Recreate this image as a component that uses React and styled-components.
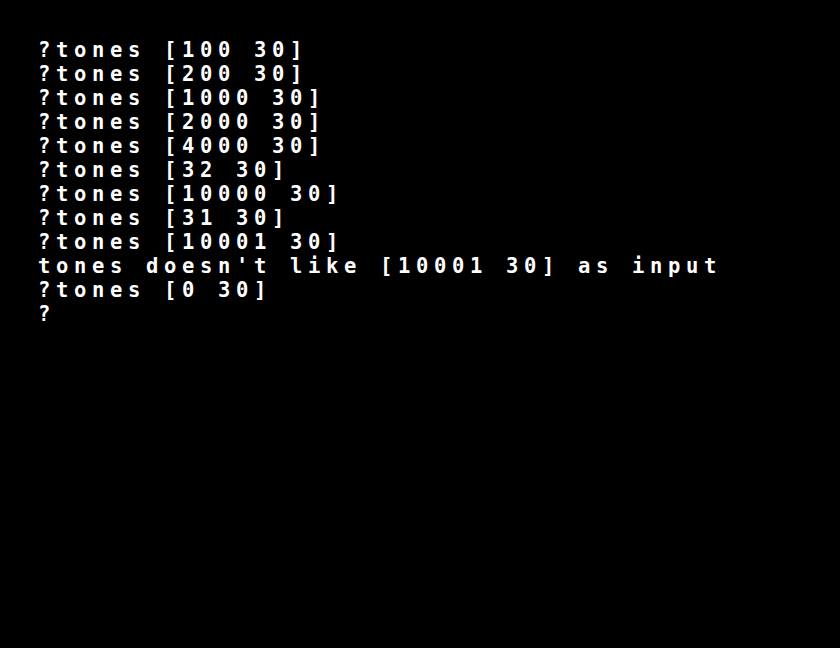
import React from "react";
import styled, { createGlobalStyle } from "styled-components";

const GlobalStyle = createGlobalStyle`
  html, body {
    margin: 0;
    padding: 0;
    background: #000;
  }
`;

const Screen = styled.div`
  width: 840px;
  height: 648px;
  box-sizing: border-box;
  padding: 38px 38px;
  background: #000;
  color: #fff;
  font-family: "DejaVu Sans Mono", "Liberation Mono", monospace;
  font-size: 20.5px;
  font-weight: bold;
  letter-spacing: 5.66px;
  line-height: 24px;
  overflow: hidden;
`;

const Line = styled.div`
  white-space: pre;
  height: 24px;
`;

const lines = [
  "?tones [100 30]",
  "?tones [200 30]",
  "?tones [1000 30]",
  "?tones [2000 30]",
  "?tones [4000 30]",
  "?tones [32 30]",
  "?tones [10000 30]",
  "?tones [31 30]",
  "?tones [10001 30]",
  "tones doesn't like [10001 30] as input",
  "?tones [0 30]",
  "?",
];

export default function App() {
  return (
    <>
      <GlobalStyle />
      <Screen>
        {lines.map((text, i) => (
          <Line key={i}>{text}</Line>
        ))}
      </Screen>
    </>
  );
}
